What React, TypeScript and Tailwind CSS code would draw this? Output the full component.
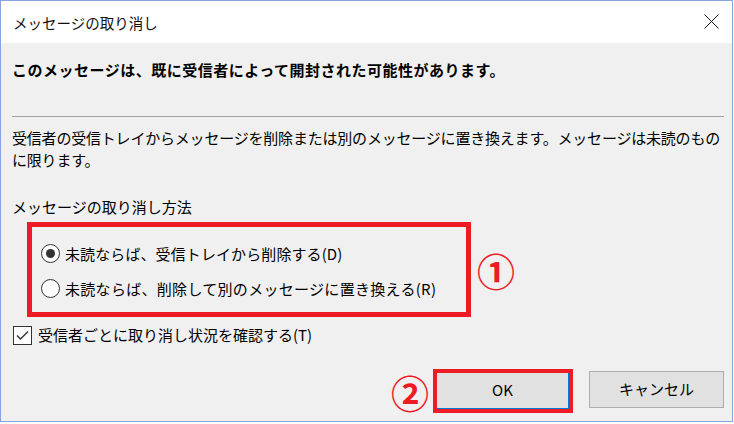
import React from "react";

const font = { fontFamily: '"Noto Sans CJK JP", "Noto Sans", sans-serif' };

function Radio({ checked }: { checked?: boolean }) {
  return (
    <span className="flex h-[19px] w-[19px] shrink-0 items-center justify-center rounded-full border border-[#333333] bg-white">
      {checked && <span className="h-[9px] w-[9px] rounded-full bg-[#333333]" />}
    </span>
  );
}

export default function App() {
  return (
    <div className="h-[424px] w-[734px] bg-white text-black" style={font}>
      <div className="flex h-[422px] w-[733px] flex-col border border-[#86a5e0] bg-[#f0f0f0]">
        {/* Title bar */}
        <div className="flex h-[42px] items-center justify-between bg-white pl-3 pr-[13px]">
          <span className="mt-[3px] text-[14.5px] leading-none text-[#111]">メッセージの取り消し</span>
          <svg width="15" height="15" viewBox="0 0 15 15" className="mt-[-1px]">
            <path d="M0.5 0.5 L14.5 14.5 M14.5 0.5 L0.5 14.5" stroke="#111" strokeWidth="1" fill="none" />
          </svg>
        </div>

        {/* Body */}
        <div className="flex flex-col pl-[11px] pr-[8px]">
          <p className="pt-[16px] text-[15px] font-bold leading-[22px] tracking-[0.5px] whitespace-nowrap">
            このメッセージは、既に受信者によって開封された可能性があります。
          </p>
          <div className="mt-[35px] h-px bg-[#a0a0a0]" />
          <p className="mt-[10px] text-[15px] leading-[22px] tracking-[-0.2px] whitespace-nowrap">
            受信者の受信トレイからメッセージを削除または別のメッセージに置き換えます。メッセージは未読のもの
            <br />
            に限ります。
          </p>
          <p className="mt-[25px] text-[15px] leading-[22px] whitespace-nowrap">メッセージの取り消し方法</p>

          <div className="mt-[4px] flex items-center">
            <div className="ml-[15px] flex h-[95px] w-[444px] flex-col border-[5px] border-[#ed1c24] pl-[9px] pt-[9px]">
              <div className="flex h-[35px] items-center gap-[5px]">
                <Radio checked />
                <span className="text-[15px] leading-[22px] tracking-[0.1px] whitespace-nowrap">未読ならば、受信トレイから削除する(D)</span>
              </div>
              <div className="flex h-[35px] items-center gap-[5px]">
                <Radio />
                <span className="text-[15px] leading-[22px] tracking-[0.3px] whitespace-nowrap">未読ならば、削除して別のメッセージに置き換える(R)</span>
              </div>
            </div>
            <span className="ml-[6px] text-[38px] font-bold leading-none text-[#ed1c24]">①</span>
          </div>

          <div className="mt-[7px] flex h-[22px] items-center gap-[6px] pl-[1px]">
            <span className="flex h-[19px] w-[19px] items-center justify-center border border-[#333333] bg-white">
              <svg width="13" height="11" viewBox="0 0 13 11">
                <path d="M1 5.5 L4.5 9 L12 1.5" stroke="#333" strokeWidth="1.4" fill="none" />
              </svg>
            </span>
            <span className="text-[15px] leading-[22px] whitespace-nowrap">受信者ごとに取り消し状況を確認する(T)</span>
          </div>

          <div className="mt-[23px] flex items-start justify-end">
            <span className="mr-[4px] mt-[4px] text-[38px] font-bold leading-none text-[#ed1c24]">②</span>
            <div className="h-[44px] w-[140px] border-[4px] border-[#ed1c24]">
              <div className="flex h-full w-full items-center justify-center border-b border-r border-[#0078d7] bg-[#e1e1e1] text-[15px] font-normal">
                OK
              </div>
            </div>
            <div className="ml-[16px] mt-[2px] flex h-[37px] w-[135px] items-center justify-center border border-[#adadad] bg-[#e1e1e1] text-[15px]">
              キャンセル
            </div>
          </div>
        </div>
      </div>
    </div>
  );
}
